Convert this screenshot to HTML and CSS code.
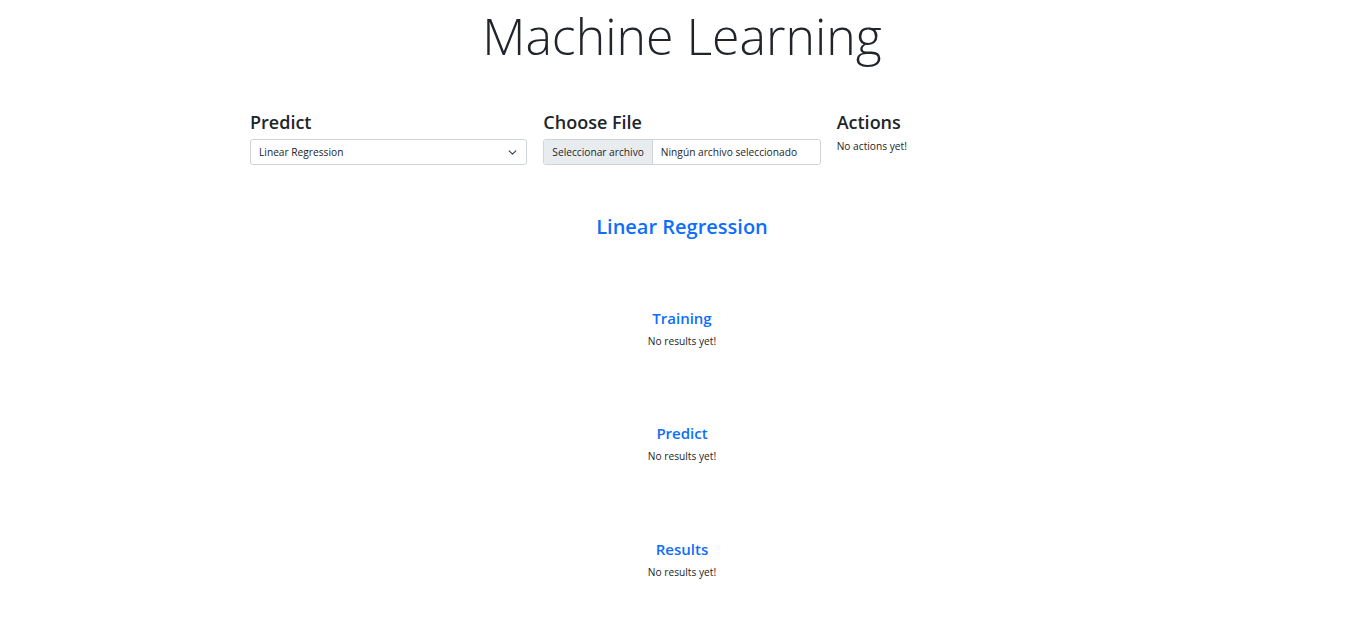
FILE: index.html
```html
<!DOCTYPE html>
<html lang="es">
<head>
<meta charset="utf-8">
<title>Machine Learning</title>
<link rel="stylesheet" href="styles.css">
</head>
<body>
<div class="page">
  <h1 class="title">Machine Learning</h1>
  <div class="controls">
    <div class="col">
      <h5 class="col-title">Predict</h5>
      <div class="select">
        <span>Linear Regression</span>
        <svg class="chev" width="9" height="9" viewBox="0 0 16 16"><path d="M2 5l6 6 6-6" fill="none" stroke="#343a40" stroke-width="1.8" stroke-linecap="round" stroke-linejoin="round"/></svg>
      </div>
    </div>
    <div class="col">
      <h5 class="col-title">Choose File</h5>
      <div class="file">
        <span class="file-btn">Seleccionar archivo</span>
        <span class="file-name">Ningún archivo seleccionado</span>
      </div>
    </div>
    <div class="col">
      <h5 class="col-title">Actions</h5>
      <p class="small-text">No actions yet!</p>
    </div>
  </div>
  <h4 class="model">Linear Regression</h4>
  <section class="block">
    <h6 class="block-title">Training</h6>
    <p class="small-text">No results yet!</p>
  </section>
  <section class="block">
    <h6 class="block-title">Predict</h6>
    <p class="small-text">No results yet!</p>
  </section>
  <section class="block">
    <h6 class="block-title">Results</h6>
    <p class="small-text">No results yet!</p>
  </section>
</div>
</body>
</html>
```
FILE: styles.css
```css
* { box-sizing: border-box; }
html, body { margin: 0; padding: 0; background: #fff; }
body {
  font-family: "Open Sans", "Noto Sans", sans-serif;
  color: #212529;
}
.page {
  width: 864px;
  margin: 0 auto;
  display: flex;
  flex-direction: column;
  align-items: stretch;
}
.title {
  margin: 0;
  text-align: center;
  font-weight: 300;
  font-size: 50px;
  line-height: 72px;
  color: #212529;
}
.controls {
  margin-top: 38px;
  display: grid;
  grid-template-columns: repeat(3, 1fr);
  column-gap: 16px;
}
.col-title {
  margin: 0 0 5px 0;
  font-size: 18px;
  font-weight: 600;
  line-height: 24px;
}
.select {
  height: 26px;
  border: 1px solid #ced4da;
  border-radius: 3px;
  display: flex;
  align-items: center;
  justify-content: space-between;
  padding: 0 8px;
  font-size: 10.2px;
  color: #212529;
}
.chev { margin-right: 1px; }
.file {
  height: 26px;
  border: 1px solid #ced4da;
  border-radius: 3px;
  display: flex;
  align-items: stretch;
  font-size: 10.2px;
  overflow: hidden;
}
.file-btn {
  background: #e9ecef;
  border-right: 1px solid #ced4da;
  padding: 0 8px;
  display: flex;
  align-items: center;
}
.file-name {
  padding: 0 8px;
  display: flex;
  align-items: center;
}
.small-text {
  margin: 0;
  font-size: 10.2px;
  line-height: 14px;
}
.col .small-text { margin-top: 0; }
.model {
  margin: 48px 0 0 0;
  text-align: center;
  font-size: 20px;
  font-weight: 600;
  line-height: 28px;
  color: #0d6efd;
}
.block {
  text-align: center;
  margin-top: 67px;
}
.block + .block { margin-top: 75px; }
.block:last-child { margin-top: 76px; }
.block-title {
  margin: 0 0 6px 0;
  font-size: 15px;
  font-weight: 600;
  line-height: 20px;
  color: #0d6efd;
}
```
